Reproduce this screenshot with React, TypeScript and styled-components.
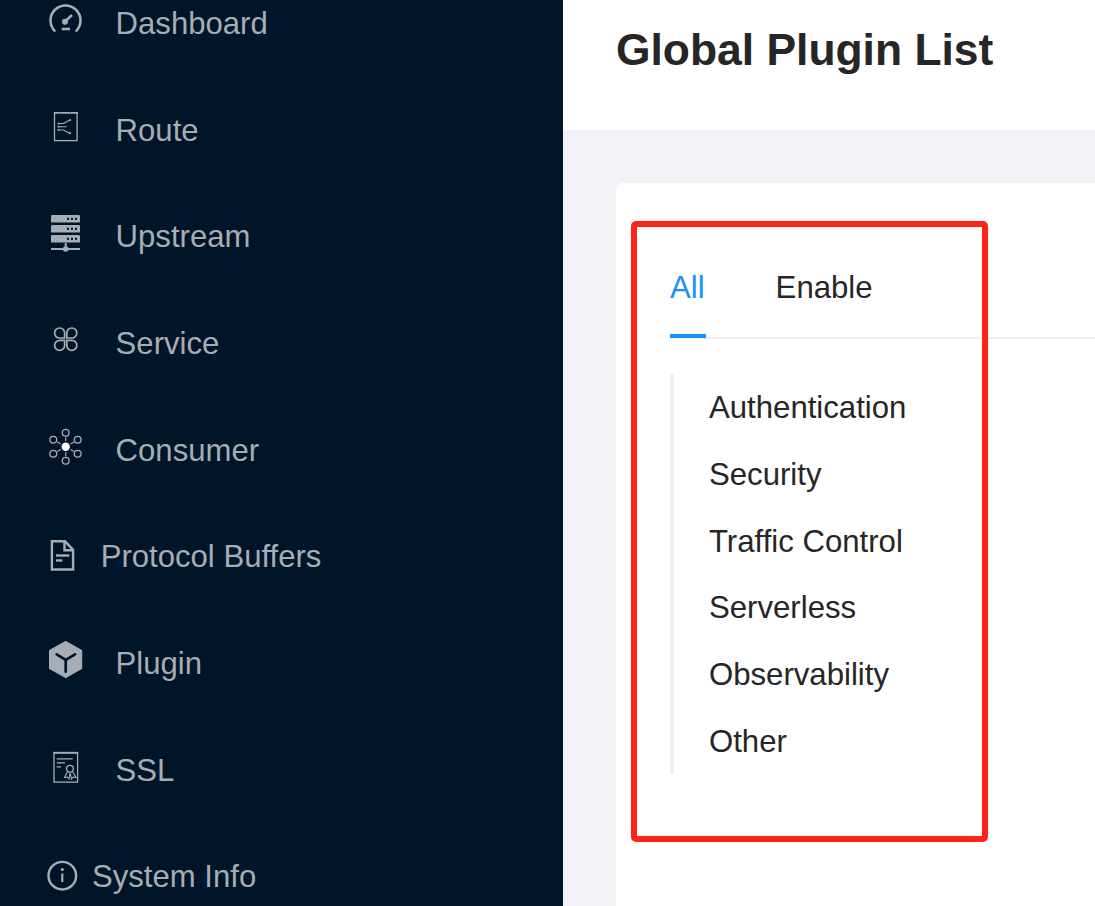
import { ReactNode } from "react";
import styled, { createGlobalStyle } from "styled-components";

const GlobalStyle = createGlobalStyle`
  html, body {
    margin: 0;
    padding: 0;
    background: #f0f2f5;
  }
  * {
    box-sizing: border-box;
  }
`;

const Page = styled.div`
  display: flex;
  width: 1095px;
  height: 906px;
  overflow: hidden;
  font-family: "Liberation Sans", Arial, sans-serif;
`;

const Sidebar = styled.aside`
  flex: 0 0 563px;
  height: 906px;
  overflow: hidden;
  background: #001529;
`;

const Menu = styled.ul`
  list-style: none;
  margin: -29.2px 0 0;
  padding: 0;
`;

const MenuItem = styled.li`
  display: flex;
  align-items: center;
  height: 106.65px;
  padding-left: 44px;
  color: #a6adb4;
  font-size: 31.1px;
`;

const IconSlot = styled.span<{ $width: number }>`
  display: flex;
  flex: 0 0 ${(p) => p.$width}px;
  width: ${(p) => p.$width}px;
  margin-top: -2px;

  svg {
    display: block;
    overflow: visible;
  }
`;

const Content = styled.main`
  flex: 1;
  min-width: 0;
`;

const TitleBar = styled.header`
  display: flex;
  align-items: center;
  height: 130px;
  padding: 0 0 30px 53px;
  background: #fff;
`;

const Title = styled.h1`
  margin: 0;
  color: #262626;
  font-size: 44.4px;
  font-weight: 700;
  white-space: nowrap;
`;

const Card = styled.section`
  position: relative;
  width: 600px;
  height: 800px;
  margin: 53px 0 0 53px;
  padding: 54px 0 0 54px;
  background: #fff;
  border-radius: 6px;
`;

const TabBar = styled.div`
  display: flex;
  gap: 70px;
  height: 102px;
  border-bottom: 2px solid #f0f0f0;
`;

const Tab = styled.div<{ $active?: boolean }>`
  display: flex;
  align-items: center;
  flex-shrink: 0;
  height: 101px;
  padding: 5px 1px 0 0;
  color: ${(p) => (p.$active ? "#1890ff" : "#262626")};
  border-bottom: 4px solid ${(p) => (p.$active ? "#1890ff" : "transparent")};
  font-size: 31.15px;
`;

const Anchor = styled.ul`
  list-style: none;
  height: 400px;
  margin: 35px 0 0;
  padding: 0 0 0 35px;
  border-left: 4px solid #f0f0f0;
`;

const AnchorItem = styled.li`
  display: flex;
  align-items: center;
  height: 66.7px;
  padding-top: 2px;
  color: #262626;
  font-size: 31.15px;
`;

const Highlight = styled.div`
  position: absolute;
  left: 15px;
  top: 38px;
  width: 357px;
  height: 621px;
  border: 6px solid #ff2318;
  border-radius: 5px;
`;

const Svg = ({ children }: { children: ReactNode }) => (
  <svg width="40" height="36" viewBox="0 0 40 36" fill="none" stroke="#a6adb4">
    {children}
  </svg>
);

const DashboardIcon = () => (
  <Svg>
    <path d="M10.5 25.7 A15 15 0 1 1 32.5 25.7" strokeWidth="2.6" strokeLinecap="round" />
    <path d="M17.7 24 h8.3" strokeWidth="2.6" />
    <path d="M20 17.5 L28 10" strokeWidth="2.4" />
    <circle cx="21" cy="16.7" r="3" fill="#a6adb4" stroke="none" />
  </Svg>
);

const RouteIcon = () => (
  <Svg>
    <rect x="10.5" y="1" width="22.6" height="27.6" strokeWidth="1.3" />
    <path d="M10 .6 h24" strokeWidth="1.2" strokeDasharray="6 1 9 1 7" />
    <path d="M14.5 11.5 h5 l5.5 -3 M14.5 14.8 h8 M14.5 18 h5 l5.5 3" strokeWidth="1.1" />
    <circle cx="26" cy="8.2" r="1.1" fill="#a6adb4" stroke="none" />
    <circle cx="26" cy="21.2" r="1.1" fill="#a6adb4" stroke="none" />
    <circle cx="14.5" cy="11.5" r="1" fill="#a6adb4" stroke="none" />
    <circle cx="14.5" cy="14.8" r="1" fill="#a6adb4" stroke="none" />
    <circle cx="14.5" cy="18" r="1" fill="#a6adb4" stroke="none" />
  </Svg>
);

const UpstreamIcon = () => {
  const rows = [-3, 7, 17];
  return (
    <Svg>
      {rows.map((y) => (
        <g key={y}>
          <rect x="7" y={y} width="29" height="7.6" rx="1.2" fill="#a6adb4" stroke="none" />
          {[24, 28, 32].map((x) => (
            <rect key={x} x={x - 1} y={y + 2.8} width="2" height="2" fill="#001529" stroke="none" />
          ))}
        </g>
      ))}
      <path d="M7 31 h29" strokeWidth="2" />
      <path d="M21.7 25 v6" strokeWidth="2" />
      <circle cx="21.7" cy="31" r="2.8" fill="#a6adb4" stroke="none" />
    </Svg>
  );
};

const ServiceIcon = () => (
  <Svg>
    <g strokeWidth="1.7">
      <path d="M20.6 13 h-5 a5 5 0 1 1 5 -5 z" />
      <path d="M22.8 13 h5 a5 5 0 1 0 -5 -5 z" />
      <path d="M20.6 15.4 h-5 a5 5 0 1 0 5 5 z" />
      <path d="M22.8 15.4 h5 a5 5 0 1 1 -5 5 z" />
    </g>
  </Svg>
);

const ConsumerIcon = () => {
  const nodes = [
    [21.7, 0.7],
    [33.7, 7.7],
    [33.7, 21.7],
    [21.7, 28.7],
    [9.3, 21.7],
    [9.3, 7.7],
  ];
  return (
    <Svg>
      {nodes.map(([x, y]) => (
        <g key={`${x}-${y}`}>
          <circle cx={x} cy={y} r="3.4" strokeWidth="1.3" />
          <path
            d={`M${21.7 + (x - 21.7) * 0.4} ${14.7 + (y - 14.7) * 0.4} L${21.7 + (x - 21.7) * 0.68} ${14.7 + (y - 14.7) * 0.68}`}
            strokeWidth="1.2"
          />
        </g>
      ))}
      <circle cx="21.7" cy="14.7" r="4.2" fill="#fff" stroke="none" />
    </Svg>
  );
};

const ProtocolIcon = () => (
  <Svg>
    <g strokeWidth="2.4">
      <path d="M7.9 3.2 h13 l8.2 8.6 v19.7 h-21.2 z" />
      <path d="M20.5 3.2 v9 h8.6" />
      <path d="M12 17.5 h13.3" />
      <path d="M12 22.5 h6.3" />
    </g>
  </Svg>
);

const PluginIcon = () => (
  <Svg>
    <path d="M21.7 -3.4 L37.6 5.6 V23.4 L21.7 32.4 L5.6 23.4 V5.6 Z" fill="#a6adb4" stroke="#a6adb4" strokeLinejoin="round" strokeWidth="1.2" />
    <path d="M12.7 9.3 L21.7 15 L31 9.3 M21.7 15 V26.7" stroke="#001529" strokeWidth="2.7" strokeLinecap="round" />
  </Svg>
);

const SslIcon = () => (
  <Svg>
    <rect x="10" y="0.5" width="23.6" height="29.6" strokeWidth="1.3" />
    <path d="M9.5 1 h24.6" strokeWidth="1.6" />
    <path d="M12.7 6.8 h16 M12.7 10.8 h8.3 M12.7 14.8 h4.3" strokeWidth="1.3" />
    <circle cx="26" cy="16.8" r="3.4" strokeWidth="1.3" />
    <path d="M23.5 19.5 L20.5 25.5 L23.5 25 L25 27 L26.2 21 L27.5 27 L29 25 L32 25.5 L28.5 19.5" strokeWidth="1.1" />
  </Svg>
);

const InfoIcon = () => (
  <Svg>
    <circle cx="18.3" cy="17.7" r="13.8" strokeWidth="2.4" />
    <circle cx="18.3" cy="11.5" r="1.6" fill="#a6adb4" stroke="none" />
    <path d="M18.3 15.5 v8.5" strokeWidth="2.2" />
  </Svg>
);

const menu = [
  { label: "Dashboard", slot: 71.6, icon: <DashboardIcon /> },
  { label: "Route", slot: 71.6, icon: <RouteIcon /> },
  { label: "Upstream", slot: 71.6, icon: <UpstreamIcon /> },
  { label: "Service", slot: 71.6, icon: <ServiceIcon /> },
  { label: "Consumer", slot: 71.6, icon: <ConsumerIcon /> },
  { label: "Protocol Buffers", slot: 56.7, icon: <ProtocolIcon /> },
  { label: "Plugin", slot: 71.6, icon: <PluginIcon /> },
  { label: "SSL", slot: 71.6, icon: <SslIcon /> },
  { label: "System Info", slot: 48, icon: <InfoIcon /> },
];

const categories = [
  "Authentication",
  "Security",
  "Traffic Control",
  "Serverless",
  "Observability",
  "Other",
];

function App() {
  return (
    <>
      <GlobalStyle />
      <Page>
        <Sidebar>
          <Menu>
            {menu.map((item) => (
              <MenuItem key={item.label}>
                <IconSlot $width={item.slot}>{item.icon}</IconSlot>
                {item.label}
              </MenuItem>
            ))}
          </Menu>
        </Sidebar>
        <Content>
          <TitleBar>
            <Title>Global Plugin List</Title>
          </TitleBar>
          <Card>
            <TabBar>
              <Tab $active>All</Tab>
              <Tab>Enable</Tab>
            </TabBar>
            <Anchor>
              {categories.map((name) => (
                <AnchorItem key={name}>{name}</AnchorItem>
              ))}
            </Anchor>
            <Highlight />
          </Card>
        </Content>
      </Page>
    </>
  );
}

export default App;
